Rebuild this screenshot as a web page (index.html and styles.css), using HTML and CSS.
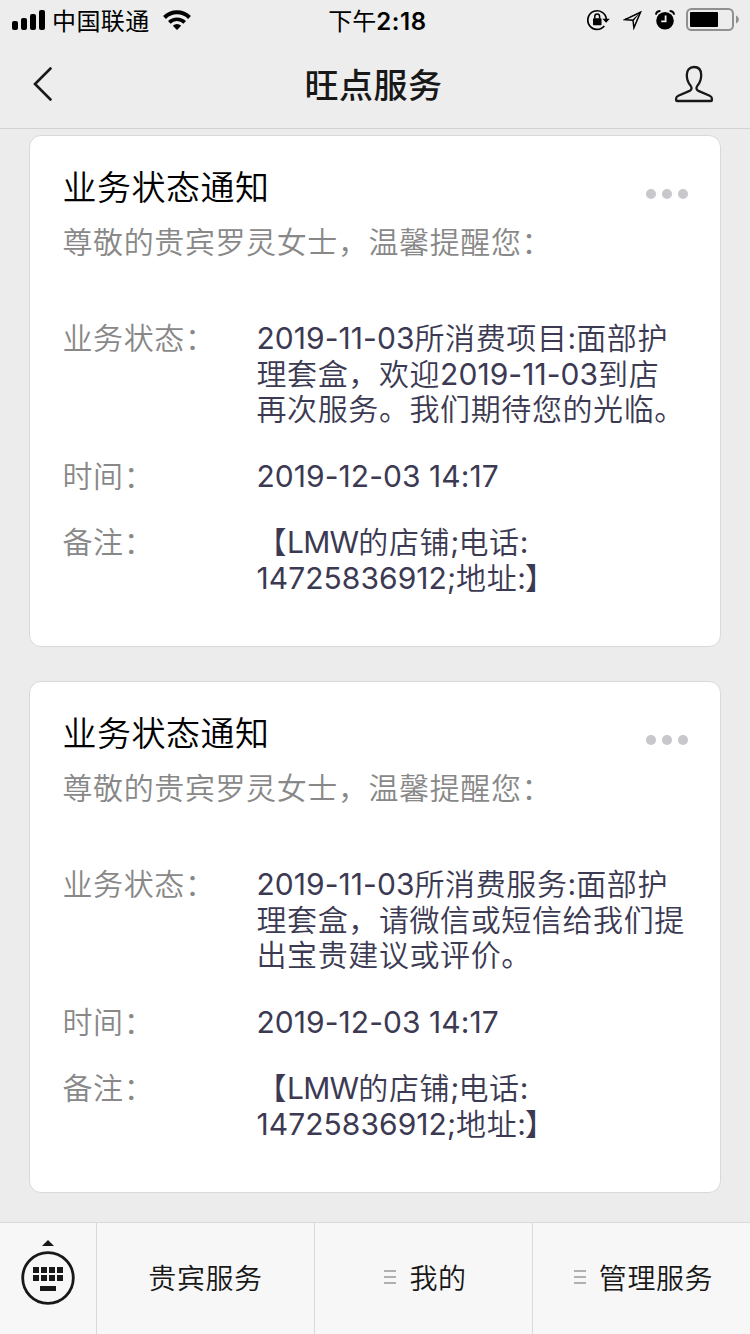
FILE: index.html
```
<!DOCTYPE html>
<html lang="zh-CN">
<head>
    <meta charset="UTF-8">
    <meta name="viewport" content="width=device-width, initial-scale=1.0">
    <title>旺点服务</title>
    <link rel="stylesheet" href="styles.css">
</head>
<body>

    <header>
        <div class="status-bar">
            <div class="status-left">
                <svg class="signal" width="34" height="20" viewBox="0 0 34 20">
                    <rect x="0" y="11" width="6" height="9" rx="2"/>
                    <rect x="9" y="8" width="6" height="12" rx="2"/>
                    <rect x="18" y="4" width="6" height="16" rx="2"/>
                    <rect x="27" y="0" width="6" height="20" rx="2"/>
                </svg>
                <span class="carrier">中国联通</span>
                <svg class="wifi" width="28" height="20" viewBox="0 0 28 20">
                    <path d="M1.5 7.5a17.7 17.7 0 0 1 25 0" fill="none" stroke="#000" stroke-width="4"/>
                    <path d="M6.3 12.4a11 11 0 0 1 15.4 0" fill="none" stroke="#000" stroke-width="3.6"/>
                    <path d="M14 20l-4.2-4.2a6 6 0 0 1 8.4 0z"/>
                </svg>
            </div>
            <div class="status-time">下午<b>2:18</b></div>
            <div class="status-right">
                <svg width="23" height="22" viewBox="0 0 23 22">
                    <path d="M17.3 17A9.3 9.3 0 1 1 19.4 10.5" fill="none" stroke="#000" stroke-width="1.7"/>
                    <path d="M15.4 9.800h7.400l-3.700 4z"/>
                    <rect x="6" y="9.2" width="8.5" height="7" rx=".8"/>
                    <path d="M7.800 9.500V7.400a2.400 2.400 0 0 1 4.800 0v2.100" fill="none" stroke="#000" stroke-width="1.5"/>
                </svg>
                <svg class="location" width="20" height="20" viewBox="0 0 20 20">
                    <path d="M17.500 2.300L2 9.600l8 .6.900 7.600z" fill="none" stroke="#000" stroke-width="1.5"/>
                    <path d="M17.500 2.200L9.500 9.500l1.400 1z"/>
                </svg>
                <svg class="alarm" width="20" height="20" viewBox="0 0 20 20">
                    <circle cx="10" cy="10.8" r="8.8"/>
                    <path d="M.9 4.600C1.200 2.400 2.800 1 5.400 1M19.100 4.600C18.800 2.400 17.200 1 14.600 1" fill="none" stroke="#000" stroke-width="2"/>
                    <path d="M10.600 5.400v6H6.200" fill="none" stroke="#eee" stroke-width="1.8"/>
                </svg>
                <svg class="battery" width="54" height="24" viewBox="0 0 54 24">
                    <rect x="1" y="1" width="46" height="21" rx="4.5" fill="none" stroke="#8f9090" stroke-width="2"/>
                    <rect x="4" y="4" width="28" height="15" rx="1"/>
                    <path d="M50 7.500c3.800 1.400 3.800 6.600 0 8z" fill="#8f9090"/>
                </svg>
            </div>
        </div>
        <nav>
            <svg class="back" width="20" height="34" viewBox="0 0 20 34">
                <path d="M17.500 1.500L2 17l15.500 15.500" fill="none" stroke="#181818" stroke-width="2.6" stroke-linecap="round"/>
            </svg>
            <h1>旺点服务</h1>
            <svg class="profile" width="40" height="38" viewBox="0 0 40 38">
                <path d="M20 2c-4.700 0-7.200 3.200-7.200 8 0 4.800 1.300 7.800 3.700 10.600 1.600 2 1.400 4.200-.9 5.300L4.300 30.800c-1.500.7-2.200 1.600-2.200 2.900v1.200c0 .7.400 1.100 1.100 1.100h33.600c.7 0 1.100-.4 1.100-1.100v-1.200c0-1.300-.7-2.200-2.200-2.900l-11.300-4.900c-2.300-1.100-2.500-3.300-.9-5.300 2.400-2.800 3.700-5.800 3.700-10.600 0-4.800-2.500-8-7.200-8z" fill="none" stroke="#181818" stroke-width="2.3"/>
            </svg>
        </nav>
    </header>

    <main>
        <section class="card">
            <div class="card-head">
                <h2>业务状态通知</h2>
                <div class="more"><i></i><i></i><i></i></div>
            </div>
            <p class="greeting">尊敬的贵宾罗灵女士，温馨提醒您：</p>
            <dl>
                <dt>业务状态：</dt>
                <dd><span>2019-11-03</span>所消费项目<span>:</span>面部护<br>理套盒，欢迎<span>2019-11-03</span>到店<br>再次服务。我们期待您的光临。</dd>
                <dt>时间：</dt>
                <dd><span>2019-12-03 14:17</span></dd>
                <dt>备注：</dt>
                <dd>【<span class="tight">LMW</span>的店铺<span class="tight">;</span>电话<span>:</span><br><span>14725836912;</span>地址<span class="tight">:</span>】</dd>
            </dl>
        </section>

        <section class="card">
            <div class="card-head">
                <h2>业务状态通知</h2>
                <div class="more"><i></i><i></i><i></i></div>
            </div>
            <p class="greeting">尊敬的贵宾罗灵女士，温馨提醒您：</p>
            <dl>
                <dt>业务状态：</dt>
                <dd><span>2019-11-03</span>所消费服务<span>:</span>面部护<br>理套盒，请微信或短信给我们提<br>出宝贵建议或评价。</dd>
                <dt>时间：</dt>
                <dd><span>2019-12-03 14:17</span></dd>
                <dt>备注：</dt>
                <dd>【<span class="tight">LMW</span>的店铺<span class="tight">;</span>电话<span>:</span><br><span>14725836912;</span>地址<span class="tight">:</span>】</dd>
            </dl>
        </section>
    </main>

    <footer>
        <div class="keyboard">
            <svg width="54" height="66" viewBox="0 0 54 66">
                <path d="M27 0l6 6H21z"/>
                <circle cx="27" cy="38" r="25.3" fill="none" stroke="#181818" stroke-width="2.8"/>
                <path d="M12 27h6v6h-6zM20 27h6v6h-6zM28 27h6v6h-6zM36 27h6v6h-6zM12 35h6v6h-6zM20 35h6v6h-6zM28 35h6v6h-6zM36 35h6v6h-6zM19 46h16v5H19z"/>
            </svg>
        </div>
        <div class="tab">贵宾服务</div>
        <div class="tab has-menu"><span class="lines"></span>我的</div>
        <div class="tab has-menu"><span class="lines"></span>管理服务</div>
    </footer>

</body>
</html>
```
FILE: styles.css
```
:root {
    --page: #ececec;
    --line: #d9d9d9;
    --ink: #181818;
    --label: #888;
    --value: #3c3a52;
}

* {
    box-sizing: border-box;
}

body {
    margin: 0;
    height: 1334px;
    display: flex;
    flex-direction: column;
    background-color: var(--page);
    color: #000;
    font-family: Inter, "Noto Sans CJK SC", sans-serif;
    font-weight: 350;
    overflow: hidden;
}

svg {
    display: block;
    flex: none;
}

h1, h2, p, dl, dd {
    margin: 0;
    font-weight: inherit;
}

header {
    height: 129px;
    background-color: #ededed;
    border-bottom: 1px solid #d2d2d2;
}

/* Status bar */
.status-bar {
    height: 40px;
    padding: 0 10px 0 12px;
    display: grid;
    grid-template-columns: 1fr auto 1fr;
    align-items: center;
    font-size: 24px;
    font-weight: 400;
}

.status-left,
.status-right {
    display: flex;
    align-items: center;
}

.carrier {
    margin-left: 6px;
    padding-bottom: 2px;
    letter-spacing: 0.4px;
}

.wifi {
    margin-left: 13px;
}

.status-time {
    padding: 0 0 2px 3px;
    white-space: nowrap;
}

.status-time b {
    font-weight: 600;
    letter-spacing: 0.6px;
}

.status-right {
    justify-content: flex-end;
}

.location {
    margin-left: 13px;
}

.alarm {
    margin-left: 12px;
}

.battery {
    margin-left: 11px;
}

/* Title bar */
nav {
    height: 88px;
    padding: 0 36px 0 33px;
    display: grid;
    grid-template-columns: 40px 1fr 40px;
    align-items: center;
}

h1 {
    padding-top: 3px;
    color: var(--ink);
    font-size: 34px;
    font-weight: 500;
    letter-spacing: 0.5px;
    line-height: 48px;
    text-align: center;
}

/* Messages */
main {
    flex: 1;
    padding: 6px 29px 0;
    display: flex;
    flex-direction: column;
    gap: 34px;
}

.card {
    height: 512px;
    padding: 28px 32px 0 32.5px;
    background-color: #fff;
    border: 1px solid var(--line);
    border-radius: 12px;
}

.card-head {
    display: flex;
    justify-content: space-between;
    align-items: center;
}

h2 {
    font-size: 34px;
    letter-spacing: 0.5px;
    line-height: 48px;
}

.more {
    display: flex;
    gap: 6px;
    padding-top: 12px;
}

.more i {
    width: 10px;
    height: 10px;
    border-radius: 50%;
    background-color: #c7c7cc;
}

.greeting {
    margin-top: 12px;
    color: var(--label);
    font-size: 30px;
    letter-spacing: 0.6px;
    line-height: 36px;
}

dl {
    margin-top: 61.2px;
    display: grid;
    grid-template-columns: 194px 1fr;
    row-gap: 30.8px;
    font-size: 30px;
    letter-spacing: 0.6px;
    line-height: 35.6px;
    white-space: nowrap;
}

dt {
    color: var(--label);
}

dd {
    color: var(--value);
}

/* Digits and latin run without the extra tracking */
dd span {
    font-weight: 400;
    letter-spacing: 0.05px;
}

dd .tight {
    letter-spacing: -0.8px;
}

/* Bottom menu */
footer {
    height: 112px;
    display: grid;
    grid-template-columns: 96px repeat(3, 218px);
    background-color: #f7f7f7;
    border-top: 1px solid var(--line);
    color: var(--ink);
}

.keyboard {
    padding: 17px 0 0 21px;
    fill: var(--ink);
}

.tab {
    display: flex;
    justify-content: center;
    align-items: center;
    padding-bottom: 3px;
    border-left: 1px solid var(--line);
    font-size: 28px;
    letter-spacing: 0.6px;
}

.has-menu {
    padding-left: 4px;
}

.lines {
    width: 12px;
    height: 14px;
    margin-right: 13px;
    border-top: 2px solid #b0b0b0;
    border-bottom: 2px solid #b0b0b0;
    background: linear-gradient(#b0b0b0, #b0b0b0) center / 12px 2px no-repeat;
}
```
